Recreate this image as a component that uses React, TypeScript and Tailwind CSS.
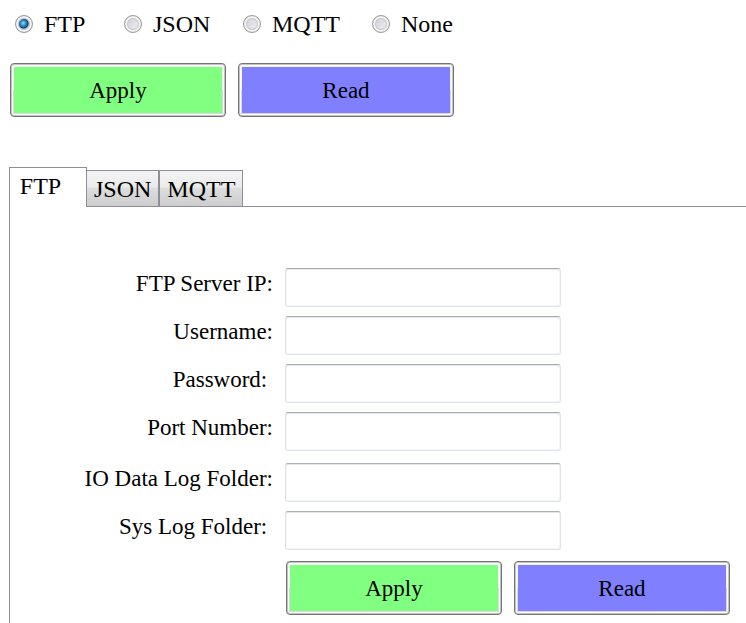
import { useState } from "react";
import clsx from "clsx";

type Protocol = "FTP" | "JSON" | "MQTT" | "None";

const protocols: Protocol[] = ["FTP", "JSON", "MQTT", "None"];
const tabs: Protocol[] = ["FTP", "JSON", "MQTT"];

interface Field {
  id: string;
  label: string;
  type?: string;
}

const serverFields: Field[] = [
  { id: "server-ip", label: "FTP Server IP:" },
  { id: "username", label: "Username:" },
  { id: "password", label: "Password:\u00a0", type: "password" },
  { id: "port", label: "Port Number:" },
];

const folderFields: Field[] = [
  { id: "data-folder", label: "IO Data Log Folder:" },
  { id: "sys-folder", label: "Sys Log Folder:\u00a0" },
];

function ActionButtons() {
  return (
    <div className="flex gap-3">
      <ActionButton label="Apply" fill="bg-[#80ff80]" />
      <ActionButton label="Read" fill="bg-[#8080ff]" />
    </div>
  );
}

function ActionButton({ label, fill }: { label: string; fill: string }) {
  return (
    <button
      type="button"
      className="flex h-[54px] w-[216px] shrink-0 rounded-[4px] border border-[#747474] bg-linear-to-b from-[#f4f4f4] from-50% to-[#dadada] to-50% p-[3px] shadow-[inset_0_0_0_1px_#c4c4c4,inset_0_0_0_2px_#fbfbfb]"
    >
      <span className={clsx("flex flex-1 items-center justify-center self-stretch text-[23px] leading-none", fill)}>
        {label}
      </span>
    </button>
  );
}

function FieldGroup({ fields }: { fields: Field[] }) {
  return (
    <div className="flex flex-col gap-[9px]">
      {fields.map((field) => (
        <div key={field.id} className="flex h-[39px] items-center gap-3">
          <label htmlFor={field.id} className="w-[263px] shrink-0 pb-2 text-right text-[23px] leading-7 whitespace-nowrap">
            {field.label}
          </label>
          <input
            id={field.id}
            type={field.type ?? "text"}
            className="h-full w-[276px] rounded-[3px] border border-[#dfe4ec] border-t-[#abadb3] bg-white px-2 text-[23px] shadow-[inset_0_1px_0_#e4e5e8,inset_0_0_0_1px_#f3f5f9] outline-none"
          />
        </div>
      ))}
    </div>
  );
}

export default function App() {
  const [protocol, setProtocol] = useState<Protocol>("FTP");
  const [tab, setTab] = useState<Protocol>("FTP");

  return (
    <main className="flex min-h-screen flex-col overflow-hidden bg-white pl-[9px] font-['Liberation_Serif',serif] text-black">
      <div className="grid grid-cols-[109px_119px_129px_auto] pt-2 pl-[6px]">
        {protocols.map((name) => (
          <label key={name} className="flex items-center gap-[11px] text-2xl">
            <input
              type="radio"
              name="protocol"
              checked={protocol === name}
              onChange={() => setProtocol(name)}
              className="size-[18px] shrink-0 appearance-none rounded-full border border-[#999999] bg-linear-135 from-[#c9ccd2] to-[#f4f5f6] shadow-[inset_0_0_0_2px_#f4f4f4,inset_0_0_0_3px_#c3c5ca] checked:bg-[radial-gradient(circle_at_45%_45%,#8fdcf6_0,#2b86bd_3px,#123f63_5px,#c5d3dc_6px)] checked:shadow-[inset_0_0_0_2px_#f4f4f4,inset_0_0_0_3px_#b3bec6]"
            />
            {name}
          </label>
        ))}
      </div>

      <div className="mt-[23px] pl-px">
        <ActionButtons />
      </div>

      <div role="tablist" className="mt-[50px] flex items-end">
        {tabs.map((name) => (
          <button
            key={name}
            type="button"
            role="tab"
            aria-selected={tab === name}
            onClick={() => setTab(name)}
            className={clsx(
              "border border-b-0 border-[#8c8e98] text-2xl leading-8",
              tab === name
                ? "z-10 -mr-px -mb-px h-10 w-[78px] bg-white pr-[15px] pb-1"
                : "h-9 bg-[linear-gradient(#f3f3f3,#ebebeb_45%,#dddddd_50%,#cdcdcd)] px-[7px]",
            )}
          >
            {name}
          </button>
        ))}
      </div>

      <section role="tabpanel" className="flex-1 border-t border-l border-[#8c8e98] pt-[61px]">
        <div className="flex flex-col gap-3">
          <FieldGroup fields={serverFields} />
          <FieldGroup fields={folderFields} />
        </div>
        <div className="mt-[11px] pb-2 pl-[276px]">
          <ActionButtons />
        </div>
      </section>
    </main>
  );
}
